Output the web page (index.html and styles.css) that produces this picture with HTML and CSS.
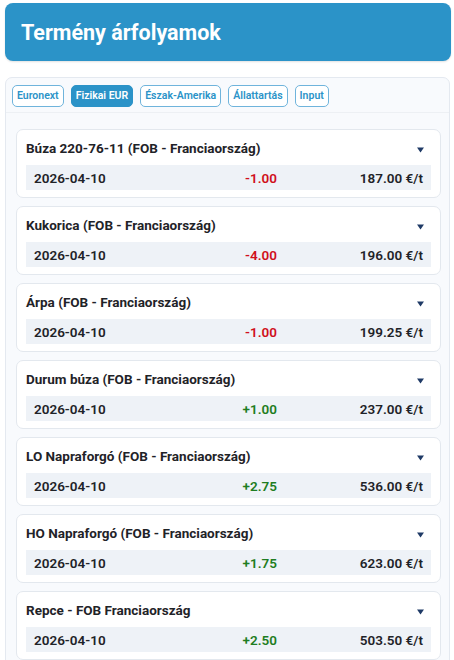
FILE: index.html
```html
<!DOCTYPE html>
<html lang="hu">
<head>
<meta charset="utf-8">
<title>Termény árfolyamok</title>
<link rel="stylesheet" href="styles.css">
</head>
<body>
<div class="app">
  <header class="header"><h1 class="title">Termény árfolyamok</h1></header>
  <section class="panel">
    <nav class="tabs">
      <button class="tab">Euronext</button>
      <button class="tab active">Fizikai EUR</button>
      <button class="tab">Észak-Amerika</button>
      <button class="tab">Állattartás</button>
      <button class="tab">Input</button>
    </nav>
    <div class="list">
      <div class="card">
        <div class="card-head"><span class="name">Búza 220-76-11 (FOB - Franciaország)</span><svg class="caret" width="7" height="6" viewBox="0 0 7 6"><polygon points="0,0.5 7,0.5 3.5,5.5"/></svg></div>
        <div class="row"><span class="date">2026-04-10</span><span class="chg neg">-1.00</span><span class="price">187.00 €/t</span></div>
      </div>
      <div class="card">
        <div class="card-head"><span class="name">Kukorica (FOB - Franciaország)</span><svg class="caret" width="7" height="6" viewBox="0 0 7 6"><polygon points="0,0.5 7,0.5 3.5,5.5"/></svg></div>
        <div class="row"><span class="date">2026-04-10</span><span class="chg neg">-4.00</span><span class="price">196.00 €/t</span></div>
      </div>
      <div class="card">
        <div class="card-head"><span class="name">Árpa (FOB - Franciaország)</span><svg class="caret" width="7" height="6" viewBox="0 0 7 6"><polygon points="0,0.5 7,0.5 3.5,5.5"/></svg></div>
        <div class="row"><span class="date">2026-04-10</span><span class="chg neg">-1.00</span><span class="price">199.25 €/t</span></div>
      </div>
      <div class="card">
        <div class="card-head"><span class="name">Durum búza (FOB - Franciaország)</span><svg class="caret" width="7" height="6" viewBox="0 0 7 6"><polygon points="0,0.5 7,0.5 3.5,5.5"/></svg></div>
        <div class="row"><span class="date">2026-04-10</span><span class="chg pos">+1.00</span><span class="price">237.00 €/t</span></div>
      </div>
      <div class="card">
        <div class="card-head"><span class="name">LO Napraforgó (FOB - Franciaország)</span><svg class="caret" width="7" height="6" viewBox="0 0 7 6"><polygon points="0,0.5 7,0.5 3.5,5.5"/></svg></div>
        <div class="row"><span class="date">2026-04-10</span><span class="chg pos">+2.75</span><span class="price">536.00 €/t</span></div>
      </div>
      <div class="card">
        <div class="card-head"><span class="name">HO Napraforgó (FOB - Franciaország)</span><svg class="caret" width="7" height="6" viewBox="0 0 7 6"><polygon points="0,0.5 7,0.5 3.5,5.5"/></svg></div>
        <div class="row"><span class="date">2026-04-10</span><span class="chg pos">+1.75</span><span class="price">623.00 €/t</span></div>
      </div>
      <div class="card">
        <div class="card-head"><span class="name">Repce - FOB Franciaország</span><svg class="caret" width="7" height="6" viewBox="0 0 7 6"><polygon points="0,0.5 7,0.5 3.5,5.5"/></svg></div>
        <div class="row"><span class="date">2026-04-10</span><span class="chg pos">+2.50</span><span class="price">503.50 €/t</span></div>
      </div>
    </div>
  </section>
</div>
</body>
</html>
```
FILE: styles.css
```css
* { box-sizing: border-box; }
html, body { margin: 0; padding: 0; background: #ffffff; }
body {
  font-family: Roboto, "Liberation Sans", Arial, sans-serif;
  color: #1f2328;
  height: 660px;
  overflow: hidden;
}
.app { padding: 3px 3px 0 5px; }
.header {
  background: #2b93c8;
  border-radius: 8px;
  height: 58px;
  display: flex;
  align-items: center;
  padding: 0 16px;
  box-shadow: 0 1px 2px rgba(0,0,0,0.12);
}
.title {
  margin: 0;
  color: #ffffff;
  font-size: 21.5px;
  font-weight: 700;
  line-height: 1;
  padding-top: 2px;
}
.panel {
  margin-top: 16px;
  margin-right: 1px;
  background: #f8fafd;
  border: 1px solid #e4e9f0;
  border-radius: 7px;
  height: 600px;
}
.tabs {
  display: flex;
  gap: 7px;
  padding: 7px 6px 5px 6px;
  border-bottom: 1px solid #edf0f4;
}
.tab {
  height: 22px;
  padding: 0 4px;
  font-family: inherit;
  font-size: 10.5px;
  font-weight: 600;
  color: #2b93c8;
  background: #ffffff;
  border: 1.5px solid #6fb4dc;
  border-radius: 5px;
  line-height: 1;
  margin: 0;
}
.tab.active {
  background: #2b93c8;
  border-color: #2b93c8;
  color: #ffffff;
}
.list {
  display: flex;
  flex-direction: column;
  gap: 8px;
  padding: 16px 8px 0 10px;
}
.card {
  background: #ffffff;
  border: 1px solid #e3e8ee;
  border-radius: 7px;
  padding: 9px 9px 7px 9px;
  height: 69px;
}
.card-head {
  display: flex;
  align-items: center;
  justify-content: space-between;
  height: 18px;
  margin-bottom: 8px;
  padding-right: 7px;
}
.name {
  font-size: 13.5px;
  font-weight: 700;
  line-height: 18px;
}
.caret { fill: #1f3a66; margin-top: 3px; }
.row {
  display: grid;
  grid-template-columns: 1fr 60px 146px;
  align-items: center;
  height: 25px;
  background: #eef2f7;
  padding: 0 8px;
  font-size: 13.5px;
  font-weight: 600;
}
.chg { text-align: right; }
.price { text-align: right; }
.neg { color: #d0101b; }
.pos { color: #1e7d22; }
```
